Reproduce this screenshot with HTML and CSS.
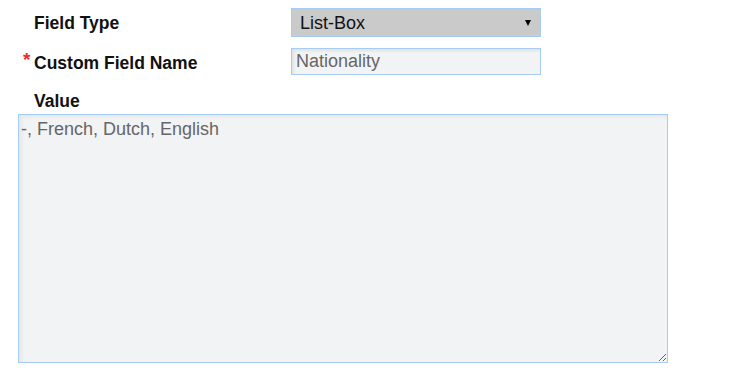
FILE: index.html
```html
<!DOCTYPE html>
<html lang="en">
<head>
    <meta charset="UTF-8">
    <title>Custom Field</title>
    <link rel="stylesheet" href="styles.css">
</head>
<body>
    <form class="field-form">
        <div class="row">
            <label class="label" for="fieldType">Field Type</label>
            <div class="select-wrap">
                <select id="fieldType" class="select">
                    <option>List-Box</option>
                    <option>Text</option>
                    <option>Date</option>
                </select>
            </div>
        </div>
        <div class="row">
            <label class="label" for="fieldName"><span class="req">*</span>Custom Field Name</label>
            <input type="text" id="fieldName" class="input" value="Nationality">
        </div>
        <label class="label value-label" for="fieldValue">Value</label>
        <textarea id="fieldValue" class="textarea">-, French, Dutch, English</textarea>
    </form>
</body>
</html>
```

FILE: styles.css
```css
body {
    margin: 0;
    background: #ffffff;
    font-family: "Liberation Sans", Arial, sans-serif;
    color: #111111;
}
.field-form {
    padding: 8px 0 0 18px;
}
.row {
    display: flex;
    align-items: center;
    margin-bottom: 11px;
}
.label {
    display: block;
    width: 257px;
    padding-left: 16px;
    font-size: 17.5px;
    font-weight: bold;
    line-height: 20px;
}
.req {
    display: inline-block;
    width: 11px;
    margin-left: -11px;
    color: #e8302a;
    font-size: 19px;
    vertical-align: 3px;
}
.select-wrap {
    position: relative;
}
.select-wrap::after {
    content: "";
    position: absolute;
    right: 10px;
    top: 12px;
    border-left: 3.5px solid transparent;
    border-right: 3.5px solid transparent;
    border-top: 6px solid #000000;
    pointer-events: none;
}
.select {
    appearance: none;
    -webkit-appearance: none;
    width: 250px;
    height: 29px;
    margin: 0;
    padding: 0 8px;
    border: 1px solid #a6ccf3;
    border-radius: 0;
    background: #cacaca;
    color: #111111;
    font-family: inherit;
    font-size: 18px;
}
.input {
    box-sizing: border-box;
    width: 250px;
    height: 27px;
    margin: 0;
    padding: 0 4px;
    border: 1px solid #a6ccf3;
    background: #f2f3f5;
    box-shadow: inset 2px 2px 3px rgba(0, 0, 0, 0.07);
    color: #666666;
    font-family: inherit;
    font-size: 18px;
}
.value-label {
    margin-top: 16px;
}
.textarea {
    box-sizing: border-box;
    display: block;
    width: 650px;
    height: 249px;
    margin: 3px 0 0;
    padding: 4px 2px;
    border: 1px solid #a6ccf3;
    background: #f2f3f5;
    box-shadow: inset 3px 2px 4px rgba(0, 0, 0, 0.05);
    color: #666666;
    font-family: inherit;
    font-size: 18px;
    line-height: 20px;
}
```
